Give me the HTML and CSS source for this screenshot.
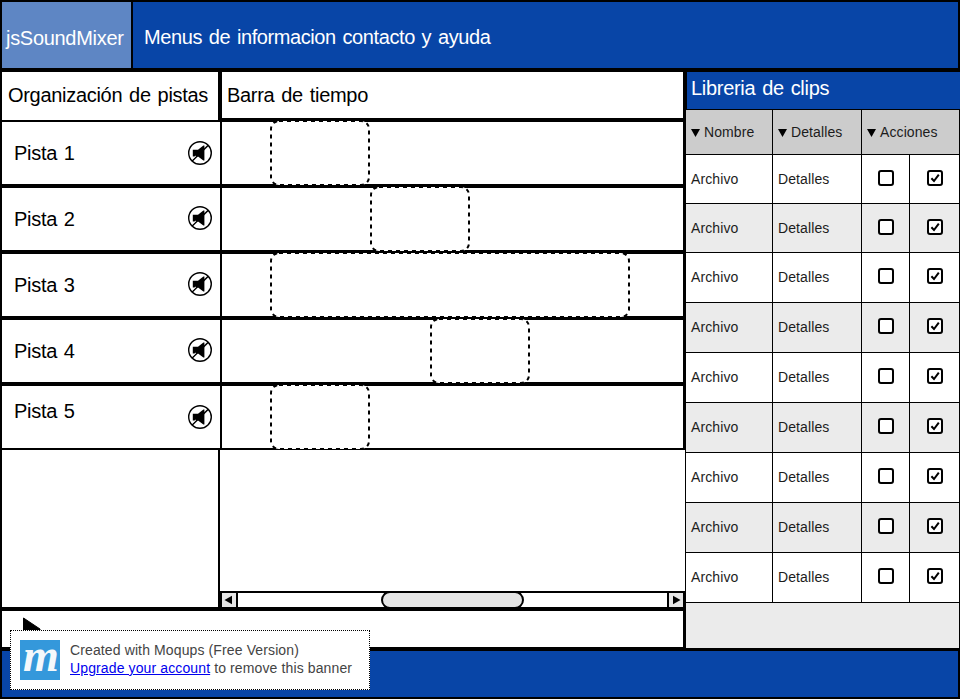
FILE: index.html
```
<!DOCTYPE html>
<html lang="es">
<head>
<meta charset="utf-8">
<title>jsSoundMixer</title>
<link rel="stylesheet" href="styles.css">
</head>
<body>
<svg width="0" height="0" class="defs" aria-hidden="true">
  <symbol id="mute" viewBox="0 0 24 24">
    <circle cx="12" cy="12" r="11.3" fill="#fff" stroke="#000" stroke-width="1.4"/>
    <path d="M4.8 8.8H10L15.4 4.6H16.4V19.4H15.4L10 15.4H4.8Z"/>
    <path d="M3.9 20.3L20.3 4.2" stroke="#000" stroke-width="1.6"/>
    <path d="M4.4 18.2L8 14.8M10.4 16.6L7.6 19.4" stroke="#fff" stroke-width=".8"/>
  </symbol>
  <symbol id="box" viewBox="0 0 16 16"><rect x="1" y="1" width="14" height="14" rx="2" fill="#fff" stroke="#000" stroke-width="2"/></symbol>
  <symbol id="checked" viewBox="0 0 16 16"><rect x="1" y="1" width="14" height="14" rx="2" fill="#fff" stroke="#000" stroke-width="2"/><path d="M4.4 8.2L7 11L11.8 4.6" fill="none" stroke="#000" stroke-width="2"/></symbol>
</svg>
<div class="app">
  <header class="top">
    <div class="brand">jsSoundMixer</div>
    <div class="menus">Menus de informacion contacto y ayuda</div>
  </header>
  <main class="body">
    <section class="mixer">
      <div class="heads">
        <div class="head org">Organización de pistas</div>
        <div class="head time">Barra de tiempo</div>
      </div>
      <div class="tracks">
        <div class="track"><div class="name"><span>Pista 1</span><svg class="mute"><use href="#mute"/></svg></div><div class="lane"><svg class="clip c1"><rect x="1" y="1" width="98" height="64" rx="8"/></svg></div></div>
        <div class="track"><div class="name up"><span>Pista 2</span><svg class="mute"><use href="#mute"/></svg></div><div class="lane"><svg class="clip c2"><rect x="1" y="1" width="98" height="64" rx="8"/></svg></div></div>
        <div class="track"><div class="name up"><span>Pista 3</span><svg class="mute"><use href="#mute"/></svg></div><div class="lane"><svg class="clip c3"><rect x="1" y="1" width="358" height="64" rx="8"/></svg></div></div>
        <div class="track"><div class="name up"><span>Pista 4</span><svg class="mute"><use href="#mute"/></svg></div><div class="lane"><svg class="clip c4"><rect x="1" y="1" width="98" height="64" rx="8"/></svg></div></div>
        <div class="track"><div class="name last"><span>Pista 5</span><svg class="mute"><use href="#mute"/></svg></div><div class="lane"><svg class="clip c1"><rect x="1" y="1" width="98" height="64" rx="8"/></svg></div></div>
      </div>
      <div class="rest">
        <div class="rest-left"></div>
        <div class="rest-right">
          <div class="canvas"></div>
          <div class="scroll">
            <div class="arrow"><svg width="14" height="14"><path d="M2.5 7L10 2.8V11.2Z"/></svg></div>
            <div class="rail"><div class="thumb"></div></div>
            <div class="arrow"><svg width="14" height="14"><path d="M4 2.8L11.5 7L4 11.2Z"/></svg></div>
          </div>
        </div>
      </div>
      <div class="player"><svg width="24" height="28"><path d="M1.5 1L18 12V28H1.5Z" stroke="#000" stroke-linejoin="round"/></svg></div>
    </section>
    <aside class="library">
      <h2>Libreria de clips</h2>
      <div class="table">
        <div class="row th"><div><i></i>Nombre</div><div><i></i>Detalles</div><div class="wide"><i></i>Acciones</div></div>
        <div class="row short"><div>Archivo</div><div>Detalles</div><div><svg><use href="#box"/></svg></div><div><svg><use href="#checked"/></svg></div></div>
        <div class="row short alt"><div>Archivo</div><div>Detalles</div><div><svg><use href="#box"/></svg></div><div><svg><use href="#checked"/></svg></div></div>
        <div class="row"><div>Archivo</div><div>Detalles</div><div><svg><use href="#box"/></svg></div><div><svg><use href="#checked"/></svg></div></div>
        <div class="row alt"><div>Archivo</div><div>Detalles</div><div><svg><use href="#box"/></svg></div><div><svg><use href="#checked"/></svg></div></div>
        <div class="row"><div>Archivo</div><div>Detalles</div><div><svg><use href="#box"/></svg></div><div><svg><use href="#checked"/></svg></div></div>
        <div class="row alt"><div>Archivo</div><div>Detalles</div><div><svg><use href="#box"/></svg></div><div><svg><use href="#checked"/></svg></div></div>
        <div class="row"><div>Archivo</div><div>Detalles</div><div><svg><use href="#box"/></svg></div><div><svg><use href="#checked"/></svg></div></div>
        <div class="row alt"><div>Archivo</div><div>Detalles</div><div><svg><use href="#box"/></svg></div><div><svg><use href="#checked"/></svg></div></div>
        <div class="row"><div>Archivo</div><div>Detalles</div><div><svg><use href="#box"/></svg></div><div><svg><use href="#checked"/></svg></div></div>
        <div class="filler"></div>
      </div>
    </aside>
  </main>
  <footer class="foot"></footer>
  <div class="banner">
    <div class="logo">m</div>
    <div class="note">Created with Moqups (Free Version)<br><a href="#">Upgrade your account</a> to remove this banner</div>
  </div>
</div>
</body>
</html>
```
FILE: styles.css
```
* { box-sizing: border-box; }
body { margin: 0; background: #fff; font-family: "Liberation Sans", Arial, sans-serif; color: #000; overflow: hidden; }
svg { display: block; flex: none; }
.defs { position: absolute; }
.app { position: relative; width: 960px; height: 699px; background: #000; font-size: 20px; line-height: 24px; letter-spacing: -.3px; word-spacing: 1.6px; white-space: nowrap; }
.top { display: flex; gap: 2px; height: 72px; padding: 2px 2px 4px; color: #fff; }
.brand { width: 129px; padding: 24px 0 0 4px; background: #5e86c4; }
.menus { flex: 1; padding: 23px 0 0 11px; letter-spacing: -.41px; background: #0845a7; }
.body { display: flex; height: 579px; }
.mixer { width: 685px; padding-left: 2px; }
.heads { display: flex; gap: 4px; align-items: flex-start; }
.head { background: #fff; padding-top: 11px; }
.org { width: 216px; height: 48px; padding-left: 6px; }
.time { width: 461px; height: 46px; padding-left: 5px; }
.tracks { display: flex; flex-direction: column; gap: 4px; padding-top: 2px; }
.track { display: flex; gap: 2px; height: 62px; }
.name { display: flex; justify-content: space-between; width: 218px; padding: 19px 8px 0 12px; background: #fff; }
.mute { width: 24px; height: 24px; }
.up .mute { margin-top: -1px; }
.last { padding-top: 13px; }
.last .mute { margin-top: 6px; }
.lane { position: relative; width: 461px; background: #fff; }
.clip { position: absolute; top: -2px; width: 100px; height: 66px; fill: #fff; stroke: #000; stroke-width: 2; stroke-dasharray: 4 4; }
.c1 { left: 48px; }
.c2 { left: 148px; }
.c3 { left: 48px; width: 360px; }
.c4 { left: 208px; }
.rest { display: flex; gap: 2px; height: 163px; padding: 2px 0 4px; }
.rest-left { width: 216px; background: #fff; }
.rest-right { flex: 1; }
.canvas { height: 141px; background: #fff; }
.scroll { display: flex; gap: 2px; height: 16px; padding: 2px 2px 0; }
.arrow { width: 14px; height: 14px; background: #e5e5e5; }
.rail { flex: 1; height: 14px; padding-left: 143px; background: #fff; overflow: hidden; }
.thumb { width: 143px; height: 18px; margin-top: -2px; border: 2px solid #000; border-radius: 9px; background: #e5e5e5; }
.player { width: 681px; height: 36px; padding: 6px 0 0 20px; background: #fff; overflow: hidden; }
.library { width: 275px; }
h2 { margin: 0 0 0 2px; height: 37px; padding: 4px 0 0 4px; font: inherit; color: #fff; background: #0845a7; }
.table { display: flex; flex-direction: column; gap: 1px; padding: 1px 1px 0; font-size: 14px; line-height: 16px; letter-spacing: .1px; word-spacing: 0; color: #1c1c1c; }
.row { display: grid; grid-template-columns: 86px 88px 47px 49px; gap: 1px; height: 49px; }
.short { height: 48px; }
.row > div { display: flex; align-items: center; padding: 0 0 1px 5px; background: #fff; }
.row.short > div, .row.th > div { padding-bottom: 0; }
.row.alt > div { background: #ebebeb; }
.row svg { width: 16px; height: 16px; margin: -2px 0 0 11px; }
.row > div:last-child svg { margin-left: 12px; }
.row.th > div { background: #ccc; }
.th { height: 44px; }
.th .wide { grid-column: 3 / 5; }
.th i { width: 9px; height: 8px; margin: 2px 4px 0 0; background: #000; clip-path: polygon(0 0, 100% 0, 50% 100%); }
.filler { height: 45px; background: #ebebeb; }
.foot { height: 46px; margin: 0 2px; background: #0845a7; }
.banner { position: absolute; left: 10px; top: 630px; display: flex; gap: 10px; width: 360px; height: 60px; padding: 9px; border: 1px dotted #000; background: #fff; }
.logo { width: 40px; height: 40px; color: #f4f8fb; background: #3498db; font: italic bold 46px/32px "Liberation Serif", serif; padding-left: 3px; letter-spacing: 0; }
.note { font-size: 14px; line-height: 18px; letter-spacing: .12px; word-spacing: 0; color: #444; padding-top: 1px; }
.note a { color: #00e; }
```
